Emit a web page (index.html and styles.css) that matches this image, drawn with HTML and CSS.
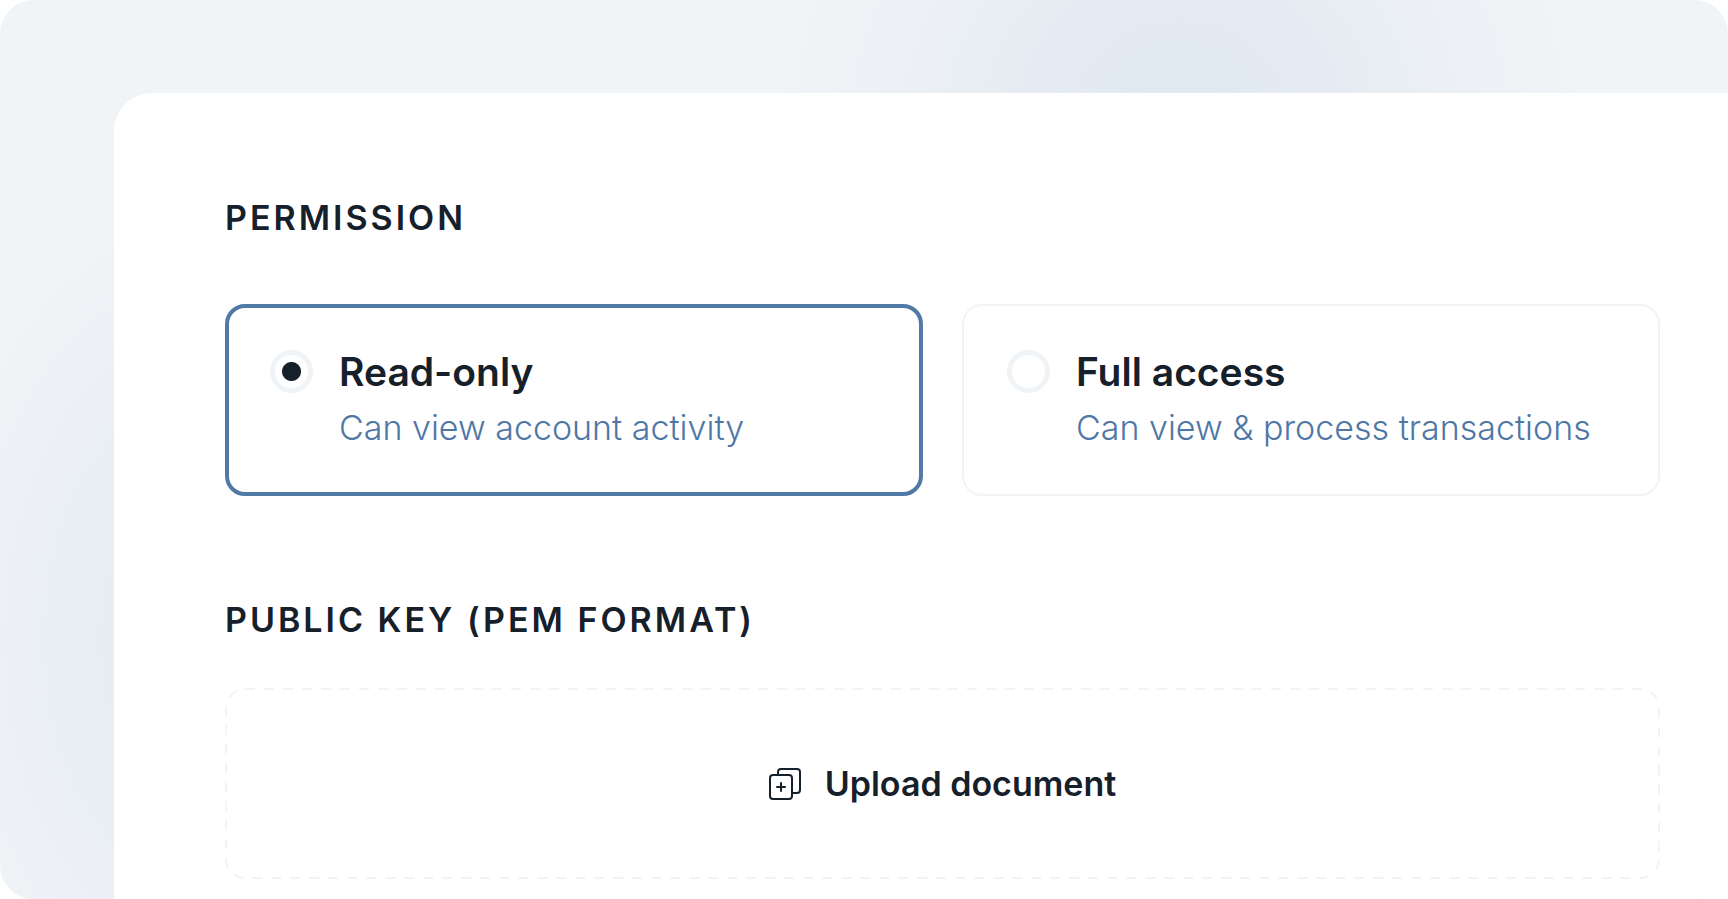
FILE: index.html
```html
<!DOCTYPE html>
<html lang="en">
<head>
<meta charset="utf-8">
<meta name="viewport" content="width=device-width, initial-scale=1">
<title>API key permissions</title>
<link rel="stylesheet" href="styles.css">
</head>
<body>
<main class="frame">
  <form class="panel">
    <fieldset class="section">
      <legend class="heading">PERMISSION</legend>
      <div class="options">
        <label class="option option-selected">
          <input class="radio" type="radio" name="permission" value="read" checked>
          <span class="option-text">
            <span class="option-title">Read-only</span>
            <span class="option-note">Can view account activity</span>
          </span>
        </label>
        <label class="option">
          <input class="radio" type="radio" name="permission" value="full">
          <span class="option-text">
            <span class="option-title">Full access</span>
            <span class="option-note">Can view &amp; process transactions</span>
          </span>
        </label>
      </div>
    </fieldset>
    <section class="section">
      <h2 class="heading">PUBLIC KEY (PEM FORMAT)</h2>
      <button class="upload" type="button">
        <svg class="upload-outline" aria-hidden="true"><rect class="upload-dash" x="1" y="1" rx="19"/></svg>
        <svg class="upload-icon" viewBox="0 0 32 32" aria-hidden="true">
          <path d="M9 6V4a3 3 0 0 1 3-3h16a3 3 0 0 1 3 3v18a3 3 0 0 1-3 3h-5"/>
          <rect x="1" y="7" width="22" height="24" rx="3"/>
          <path d="M12 15v8M8 19h8"/>
        </svg>
        <span>Upload document</span>
      </button>
    </section>
  </form>
</main>
</body>
</html>
```
FILE: styles.css
```css
* {
  box-sizing: border-box;
}

body {
  margin: 0;
  background: #fff;
  color: #16202b;
  font-family: Inter, "Liberation Sans", sans-serif;
}

.frame {
  display: flex;
  min-height: 100vh;
  padding: 93px 0 0 114px;
  overflow: hidden;
  border-radius: 34px;
  background:
    radial-gradient(circle 400px at 1180px 130px, #e1e9f2 0%, #e3eaf2 34%, #e9eef2 54%, #edf1f5 74%, #f0f4f700 100%),
    radial-gradient(ellipse 260px 420px at 190px 640px, #e5ebf0 0%, #e9eef2 50%, #edf1f5 78%, #f0f4f700 100%),
    #f0f4f7;
}

.panel {
  flex: 1;
  padding: 105px 68px 20px 111px;
  border-top-left-radius: 38px;
  background: #fff;
}

.section {
  margin: 0;
  padding: 0;
  border: 0;
}

.section + .section {
  margin-top: 104px;
}

.heading {
  margin: 0;
  padding: 0;
  font-size: 34px;
  font-weight: 600;
  line-height: 40px;
  letter-spacing: 3px;
}

.options {
  display: grid;
  grid-template-columns: 1fr 1fr;
  gap: 39px;
  margin-top: 66px;
}

.option {
  display: flex;
  gap: 26px;
  padding: 42px 43px;
  border: 2px solid #f0f4f7;
  border-radius: 20px;
}

.option-selected {
  padding: 40px 41px;
  border: 4px solid #5079a6;
}

.radio {
  flex: none;
  width: 43px;
  height: 43px;
  margin: 2px 0 0;
  border: 5px solid #f0f4f7;
  border-radius: 50%;
  appearance: none;
}

.radio:checked {
  background: radial-gradient(circle, #16202b 9px, #fff 10px);
}

.option-text {
  display: flex;
  flex-direction: column;
}

.option-title {
  font-size: 39px;
  font-weight: 600;
  line-height: 48px;
}

.option-note {
  margin-top: 8px;
  color: #4f77a6;
  font-size: 34px;
  font-weight: 300;
  line-height: 48px;
}

.upload {
  position: relative;
  display: flex;
  align-items: center;
  justify-content: center;
  gap: 24px;
  width: 100%;
  margin-top: 48px;
  padding: 74px 24px;
  border: 0;
  background: none;
  color: #16202b;
  font: 600 34px/43px Inter, "Liberation Sans", sans-serif;
}

.upload-outline {
  position: absolute;
  inset: 0;
  width: 100%;
  height: 100%;
}

.upload-dash {
  width: calc(100% - 2px);
  height: calc(100% - 2px);
  fill: none;
  stroke: #f0f4f7;
  stroke-width: 2;
  stroke-dasharray: 10 9;
}

.upload-icon {
  width: 32px;
  height: 32px;
  fill: none;
  stroke: #16202b;
  stroke-width: 2;
  stroke-linecap: round;
  stroke-linejoin: round;
}
```
